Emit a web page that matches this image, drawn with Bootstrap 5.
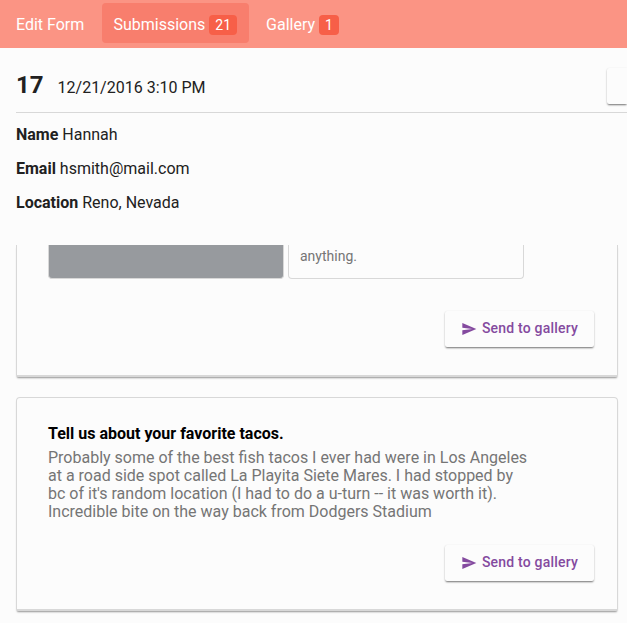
<!DOCTYPE html>
<html lang="en">
<head>
<meta charset="utf-8">
<meta name="viewport" content="width=device-width, initial-scale=1">
<title>Submissions</title>
<link href="https://cdn.jsdelivr.net/npm/bootstrap@5.3.0/dist/css/bootstrap.min.css" rel="stylesheet">
<style>
body { font-family: Roboto, sans-serif; font-size: 16px; line-height: 18px; color: #212121; background: #fcfcfc; height: 623px; }
.top-tabs { height: 48px; background: #fb9484; padding: 3px 0 5px 4px; gap: 5px; }
.top-tabs .nav-link { height: 40px; padding: 4px 12px 0; color: #fff; border-radius: 4px; gap: 4px; }
.top-tabs .nav-link.active { background: #f87e6d; margin-left: .6px; padding-left: 11.5px; }
.tab-count { height: 20px; padding: 0 6px; line-height: 20px; font-size: 14px; background: #f75f48; border-radius: 4px; }
.sub-head { height: 65px; margin-left: 16px; border-bottom: 1px solid #d8d8d8; padding-top: 19px; }
.sub-number { font-size: 24px; line-height: 36px; font-weight: 700; margin-right: 14px; }
.raised { background: #fcfcfc; border: 0; border-radius: 2px; box-shadow: 0 2px 2px -1px rgba(0,0,0,.35), 0 1px 2px rgba(0,0,0,.26), 0 0 1px rgba(0,0,0,.06); }
.head-action { width: 20px; height: 36px; margin-top: 1px; border-radius: 2px 0 0 2px; }
.sub-fields { height: 132px; padding: 13px 16px 0; gap: 16px; }
.answers { height: 378px; padding: 0 9px 0 16px; gap: 20px; }
.answer { background: #fcfcfc; border: 1px solid #d8d8d8; border-bottom: 2px solid #d8d8d8; border-radius: 4px 4px 2px 2px; box-shadow: 0 2px 2px -1px rgba(0,0,0,.42); }
.answer-cut { height: 132px; border-top: 0; border-radius: 0 0 2px 2px; padding: 0 23px 28px 31px; }
.answer-full { height: 214px; padding: 27px 23px 28px 31px; }
.choice { width: 236px; height: 34px; border: 1px solid #d8d8d8; border-top: 0; border-radius: 0 0 4px 4px; font-size: 14px; padding: 2px 11px; color: #757575; }
.choice.picked { background: #979a9e; }
.question { font-size: 16px; line-height: 18px; color: #000; margin-bottom: 6px; }
.reply { width: 490px; color: #757575; }
.send { width: 149px; height: 36px; padding: 0 0 2px; font-size: 14px; font-weight: 500; letter-spacing: .2px; color: #844a9f; gap: 5px; }
.send svg { margin-top: 2px; }
</style>
<script src="https://cdn.jsdelivr.net/npm/bootstrap@5.3.0/dist/js/bootstrap.bundle.min.js"></script>
</head>
<body class="overflow-hidden">
<nav class="nav top-tabs flex-nowrap">
  <a class="nav-link d-flex align-items-center" href="#">Edit Form</a>
  <a class="nav-link active d-flex align-items-center" href="#">Submissions <span class="tab-count">21</span></a>
  <a class="nav-link d-flex align-items-center" href="#">Gallery <span class="tab-count">1</span></a>
</nav>
<header class="sub-head d-flex justify-content-between align-items-start">
  <div class="d-flex align-items-baseline"><span class="sub-number">17</span><span>12/21/2016 3:10 PM</span></div>
  <button class="raised head-action flex-shrink-0" type="button" aria-label="Actions"></button>
</header>
<section class="sub-fields d-flex flex-column">
  <div><strong>Name</strong> Hannah</div>
  <div><strong>Email</strong> hsmith@mail.com</div>
  <div><strong>Location</strong> Reno, Nevada</div>
</section>
<main class="answers d-flex flex-column overflow-hidden">
  <article class="answer answer-cut d-flex flex-column justify-content-between flex-shrink-0">
    <div class="d-flex gap-1"><div class="choice picked"></div><div class="choice">anything.</div></div>
    <button class="raised send d-flex align-items-center justify-content-center align-self-end" type="button">
      <svg width="16" height="16" viewBox="0 0 24 24" fill="currentColor" aria-hidden="true"><path d="M2.01 21 23 12 2.01 3 2 10l15 2-15 2z"/></svg>Send to gallery
    </button>
  </article>
  <article class="answer answer-full d-flex flex-column flex-shrink-0">
    <h2 class="question fw-bold">Tell us about your favorite tacos.</h2>
    <p class="reply mb-0">Probably some of the best fish tacos I ever had were in Los Angeles<br>at a road side spot called La Playita Siete Mares. I had stopped by<br>bc of it's random location (I had to do a u-turn -- it was worth it).<br>Incredible bite on the way back from Dodgers Stadium</p>
    <button class="raised send d-flex align-items-center justify-content-center align-self-end mt-auto" type="button">
      <svg width="16" height="16" viewBox="0 0 24 24" fill="currentColor" aria-hidden="true"><path d="M2.01 21 23 12 2.01 3 2 10l15 2-15 2z"/></svg>Send to gallery
    </button>
  </article>
</main>
</body>
</html>
